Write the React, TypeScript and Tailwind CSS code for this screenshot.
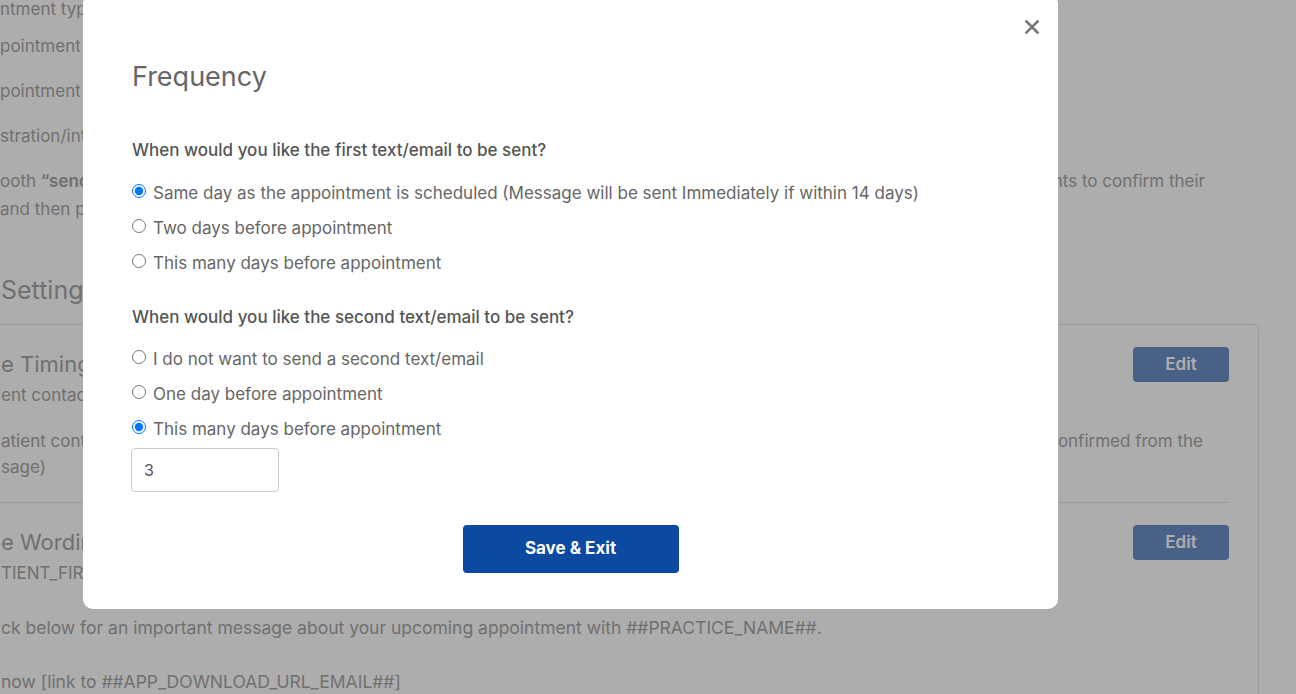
import { useState } from 'react';

const firstOptions = [
  'Same day as the appointment is scheduled (Message will be sent Immediately if within 14 days)',
  'Two days before appointment',
  'This many days before appointment',
];

const secondOptions = [
  'I do not want to send a second text/email',
  'One day before appointment',
  'This many days before appointment',
];

function RadioRow({ name, label, checked, onChange }: { name: string; label: string; checked: boolean; onChange: () => void }) {
  return (
    <label className="flex h-[35px] items-center gap-[7px] text-[17px] text-[#666]">
      <input type="radio" name={name} checked={checked} onChange={onChange} className="m-0 mb-[5px] h-[14px] w-[14px]" />
      <span>{label}</span>
    </label>
  );
}

function BackgroundPage() {
  return (
    <div className="flex flex-col text-[17px] text-[#a6a6a6]">
      <div className="-mt-[4px] flex h-[28px] items-center whitespace-nowrap">ntment types that should trigger reminders</div>
      <div className="mt-[9px] flex h-[28px] items-center whitespace-nowrap">pointment reminder message</div>
      <div className="mt-[17px] flex h-[28px] items-center whitespace-nowrap">pointment confirmation</div>
      <div className="mt-[17px] flex h-[28px] items-center whitespace-nowrap">stration/intake forms</div>
      <div className="mt-[17px] flex h-[28px] items-center justify-between whitespace-nowrap pr-[91px]">
        <span>ooth <b className="font-semibold">“send</b> messages</span>
        <span>allow patients to confirm their</span>
      </div>
      <div className="flex h-[28px] items-center whitespace-nowrap">and then patients</div>
      <div className="mt-[49px] flex h-[36px] items-center pl-[1px] text-[25px]">Settings</div>

      <div className="-ml-[20px] mt-[15px] mr-[37px] h-[400px] rounded-[6px] border border-[#e4e4e4] pl-[20px] pr-[29px]">
        <div className="mt-[22px] flex h-[35px] items-center justify-between">
          <span className="text-[22px]">e Timing</span>
          <button className="h-[35px] w-[96px] rounded-[4px] bg-[#6d90c8] text-[17px] font-semibold text-white">Edit</button>
        </div>
        <div className="flex h-[28px] items-center whitespace-nowrap">ent contact</div>
        <div className="mt-[19px] flex h-[26px] items-center justify-between whitespace-nowrap pr-[26px]">
          <span>atient contact</span>
          <span>not confirmed from the</span>
        </div>
        <div className="flex h-[26px] items-center">sage)</div>
        <div className="mt-[21px] h-px bg-[#e4e4e4]" />
        <div className="mt-[22px] flex h-[35px] items-center justify-between">
          <span className="text-[22px]">e Wording</span>
          <button className="h-[35px] w-[96px] rounded-[4px] bg-[#6d90c8] text-[17px] font-semibold text-white">Edit</button>
        </div>
        <div className="flex h-[28px] items-center whitespace-nowrap">TIENT_FIRST_NAME##,</div>
        <div className="mt-[26px] flex h-[28px] items-center whitespace-nowrap text-[17.5px]">
          ck below for an important message about your upcoming appointment with ##PRACTICE_NAME##.
        </div>
        <div className="mt-[26px] flex h-[28px] items-center whitespace-nowrap text-[17.5px]">now [link to ##APP_DOWNLOAD_URL_EMAIL##]</div>
      </div>
    </div>
  );
}

export default function App() {
  const [first, setFirst] = useState(0);
  const [second, setSecond] = useState(2);
  const [days, setDays] = useState('3');

  return (
    <div className="relative h-[694px] w-[1296px] overflow-hidden bg-white font-['Inter',sans-serif]">
      <BackgroundPage />
      <div className="absolute inset-0 bg-[rgba(0,0,0,0.32)]" />

      {/* modal */}
      <div className="absolute left-[83px] top-[-6px] flex h-[615px] w-[975px] flex-col rounded-[10px] bg-white pl-[49px] pt-[63px]">
        <button className="absolute right-[18px] top-[25px] text-[#777]">
          <svg width="16" height="16" viewBox="0 0 16 16" fill="none" stroke="currentColor" strokeWidth="2.6" strokeLinecap="square">
            <path d="M2.5 2.5 13.5 13.5M13.5 2.5 2.5 13.5" />
          </svg>
        </button>
        <h2 className="flex h-[40px] items-center text-[27px] font-normal text-[#666]">Frequency</h2>

        <p className="mt-[42px] flex h-[24px] items-center text-[17px] font-medium text-[#555]">When would you like the first text/email to be sent?</p>
        <div className="mt-[13px] flex flex-col">
          {firstOptions.map((o, i) => (
            <RadioRow key={o} name="first" label={o} checked={first === i} onChange={() => setFirst(i)} />
          ))}
        </div>

        <p className="mt-[25px] flex h-[24px] items-center text-[17px] font-medium text-[#555]">When would you like the second text/email to be sent?</p>
        <div className="mt-[12px] flex flex-col">
          {secondOptions.map((o, i) => (
            <RadioRow key={o} name="second" label={o} checked={second === i} onChange={() => setSecond(i)} />
          ))}
        </div>
        <input
          value={days}
          onChange={(e: any) => setDays(e.target.value)}
          className="mt-[1px] h-[44px] w-[148px] -ml-[1px] rounded-[4px] border border-[#ccc] px-[12px] text-[16px] text-[#555] outline-none"
        />

        <div className="-ml-[49px] mt-[33px] flex justify-center">
          <button className="h-[48px] w-[216px] rounded-[4px] bg-[#0b4aa0] text-[17px] font-bold text-white">Save &amp; Exit</button>
        </div>
      </div>
    </div>
  );
}
